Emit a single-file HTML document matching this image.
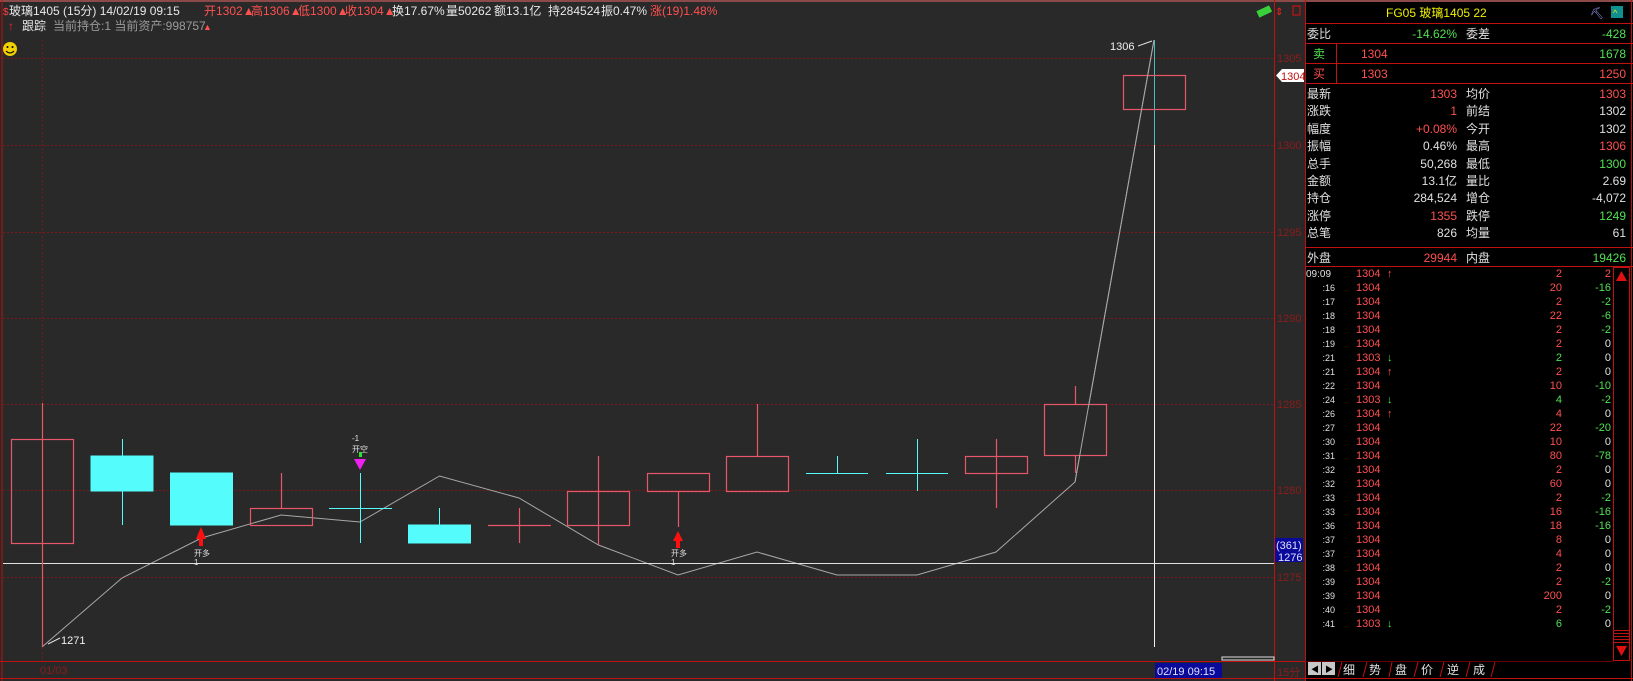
<!DOCTYPE html>
<html><head><meta charset="utf-8"><style>
html,body{margin:0;padding:0;background:#000;width:1633px;height:681px;overflow:hidden}
svg{display:block}
text{font-family:"Liberation Sans","Noto Sans CJK SC",sans-serif;font-size:12px}
</style></head><body>
<svg width="1633" height="681" viewBox="0 0 1633 681" xmlns="http://www.w3.org/2000/svg">
<rect x="0" y="0" width="1305" height="681" fill="#292929"/>
<rect x="1305" y="0" width="328" height="681" fill="#000"/>
<line x1="0" y1="1" x2="1633" y2="1" fill="none" stroke="#8a4a4a" stroke-width="2"/>
<line x1="2" y1="0" x2="2" y2="681" stroke="#c01010" stroke-width="1"/>
<line x1="1274.5" y1="0" x2="1274.5" y2="681" stroke="#c01010"/>
<line x1="1305.5" y1="0" x2="1305.5" y2="681" stroke="#c01010"/>
<line x1="0" y1="661.5" x2="1305" y2="661.5" stroke="#c01010"/>
<line x1="0" y1="678.5" x2="1305" y2="678.5" stroke="#c01010"/>
<g stroke="#7a1818" stroke-dasharray="2,2">
<line x1="3" y1="58.5" x2="1274" y2="58.5"/><line x1="3" y1="145.5" x2="1274" y2="145.5"/>
<line x1="3" y1="232.5" x2="1274" y2="232.5"/><line x1="3" y1="318.5" x2="1274" y2="318.5"/>
<line x1="3" y1="404.5" x2="1274" y2="404.5"/><line x1="3" y1="490.5" x2="1274" y2="490.5"/>
<line x1="3" y1="577.5" x2="1274" y2="577.5"/>
<line x1="42.5" y1="40" x2="42.5" y2="661"/>
</g>
<g fill="#8a1c1c">
<text x="1277" y="62" style="font-size:11px">1305</text><text x="1277" y="149" style="font-size:11px">1300</text>
<text x="1277" y="236" style="font-size:11px">1295</text><text x="1277" y="322" style="font-size:11px">1290</text>
<text x="1277" y="408" style="font-size:11px">1285</text><text x="1277" y="494" style="font-size:11px">1280</text>
<text x="1277" y="581" style="font-size:11px">1275</text><text x="1277" y="676" style="font-size:11px">15分</text>
</g>
<text x="3" y="15" fill="#ff4040" style="font-size:10px">$</text>
<text x="9" y="15" fill="#e8e8e8">玻璃1405 (15分) 14/02/19 09:15</text>
<text x="204" y="15" fill="#ff5050">开1302▲</text>
<text x="251" y="15" fill="#ff5050">高1306▲</text>
<text x="298" y="15" fill="#ff5050">低1300▲</text>
<text x="345" y="15" fill="#ff5050">收1304▲</text>
<text x="392" y="15" fill="#e8e8e8">换17.67%</text>
<text x="446" y="15" fill="#e8e8e8">量50262</text>
<text x="494" y="15" fill="#e8e8e8">额13.1亿</text>
<text x="548" y="15" fill="#e8e8e8">持284524</text>
<text x="601" y="15" fill="#e8e8e8">振0.47%</text>
<text x="650" y="15" fill="#ff5050">涨(19)1.48%</text>
<text x="8" y="30" fill="#ff2020">↑</text>
<text x="22" y="30" fill="#e8e8e8">跟踪</text>
<text x="53" y="30" fill="#9a9a9a">当前持仓:1 当前资产:998757</text>
<text x="203" y="30" fill="#ff5050" style="font-size:9px">▲</text>
<circle cx="10" cy="49" r="7" fill="#f0d000"/>
<circle cx="7.5" cy="47" r="1" fill="#000"/><circle cx="12.5" cy="47" r="1" fill="#000"/>
<path d="M6 51 Q10 55 14 51" stroke="#000" fill="none"/>
<rect x="1257" y="8" width="14" height="7" fill="#3ad03a" transform="rotate(-25 1264 11)"/>
<text x="1275" y="15" fill="#ff2020" style="font-size:10px">⇕</text>
<rect x="1293" y="6" width="7" height="9" fill="none" stroke="#e01010"/>
<polyline fill="none" stroke="#a8a8a8" stroke-width="1" points="42,647 122,578 201.5,538 281,515 360,522 439.5,476 519,498 598.5,545 678,575 757,552 837,575 917,575 996,552 1075,482 1154,40"/>
<line x1="3" y1="563.5" x2="1274" y2="563.5" stroke="#e0e0e0"/>
<line x1="1154.5" y1="40" x2="1154.5" y2="647" stroke="#e8f0f0"/>
<line x1="1154.5" y1="40" x2="1154.5" y2="145" stroke="#40c0c0"/>
<g stroke="#e8566a" fill="none" stroke-width="1.2">
<line x1="42.5" y1="403" x2="42.5" y2="647"/><rect x="11.5" y="439.5" width="62" height="104"/>
<line x1="281.5" y1="473" x2="281.5" y2="508"/><rect x="250.5" y="508.5" width="62" height="17"/>
<line x1="519.5" y1="508" x2="519.5" y2="543"/><line x1="488" y1="525.5" x2="551" y2="525.5"/>
<line x1="598.5" y1="456" x2="598.5" y2="545"/><rect x="567.5" y="491.5" width="62" height="34"/>
<line x1="678.5" y1="491" x2="678.5" y2="527"/><rect x="647.5" y="473.5" width="62" height="18"/>
<line x1="757.5" y1="404" x2="757.5" y2="456"/><rect x="726.5" y="456.5" width="62" height="35"/>
<line x1="996.5" y1="439" x2="996.5" y2="508"/><rect x="965.5" y="456.5" width="62" height="17"/>
<line x1="1075.5" y1="386" x2="1075.5" y2="473"/><rect x="1044.5" y="404.5" width="62" height="51" fill="#292929"/>
<rect x="1123.5" y="75.5" width="62" height="34"/>
</g>
<polyline fill="none" stroke="#a8a8a8" points="1075,482 1154,40"/>
<g stroke="#54fcfc" fill="#54fcfc">
<line x1="122.5" y1="439" x2="122.5" y2="525"/><rect x="91" y="456" width="62" height="35"/>
<rect x="170.5" y="473" width="62" height="52"/>
<line x1="360.5" y1="473" x2="360.5" y2="543"/><line x1="329" y1="508.5" x2="392" y2="508.5"/>
<line x1="439.5" y1="508" x2="439.5" y2="525"/><rect x="408.5" y="525" width="62" height="18"/>
<line x1="837.5" y1="456" x2="837.5" y2="473"/><line x1="806" y1="473.5" x2="868" y2="473.5"/>
<line x1="917.5" y1="439" x2="917.5" y2="491"/><line x1="886" y1="473.5" x2="948" y2="473.5"/>
</g>
<path d="M201 527 L196 539 L199 539 L199 546 L203 546 L203 539 L206 539 Z" fill="#ff1010"/>
<text x="194" y="556" fill="#e0e0e0" style="font-size:8px">开多</text>
<text x="194" y="565" fill="#e0e0e0" style="font-size:8px">1</text>
<path d="M678 531 L673 541 L676 541 L676 548 L680 548 L680 541 L683 541 Z" fill="#ff1010"/>
<text x="671" y="556" fill="#e0e0e0" style="font-size:8px">开多</text>
<text x="671" y="565" fill="#e0e0e0" style="font-size:8px">1</text>
<text x="352" y="441" fill="#e0e0e0" style="font-size:8px">-1</text>
<text x="352" y="452" fill="#e0e0e0" style="font-size:8px">开空</text>
<rect x="359" y="452" width="3" height="5" fill="#30e030"/>
<path d="M354 459 L366 459 L360 470 Z" fill="#f020f0"/>
<path d="M48 644 L60 638" stroke="#e0e0e0"/>
<text x="61" y="644" fill="#f0f0f0" style="font-size:11px">1271</text>
<path d="M1138 46 L1152 41" stroke="#e0e0e0"/>
<text x="1110" y="50" fill="#f0f0f0" style="font-size:11px">1306</text>
<path d="M1282 69 L1304 69 L1304 82 L1282 82 L1276 75.5 Z" fill="#fff"/>
<text x="1281" y="80" fill="#c01010" style="font-size:11px">1304</text>
<rect x="1275" y="538" width="28" height="24" fill="#0a0a9a"/>
<text x="1276" y="549" fill="#e0e0ff" style="font-size:11px">(361)</text>
<text x="1278" y="561" fill="#e0e0ff" style="font-size:11px">1276</text>
<text x="40" y="674" fill="#8a1c1c" style="font-size:11px">01/03</text>
<rect x="1155" y="663" width="67" height="15" fill="#0a0a9a"/>
<text x="1157" y="675" fill="#e0e0ff" style="font-size:11px">02/19 09:15</text>
<rect x="1222" y="657" width="52" height="3" fill="none" stroke="#e0e0e0"/>
<g stroke="#c01010">
<line x1="1305" y1="23.5" x2="1633" y2="23.5"/><line x1="1305" y1="43.5" x2="1633" y2="43.5"/>
<line x1="1305" y1="63.5" x2="1633" y2="63.5"/><line x1="1305" y1="83.5" x2="1633" y2="83.5"/>
<line x1="1305" y1="247.5" x2="1633" y2="247.5"/><line x1="1305" y1="266.5" x2="1633" y2="266.5"/>
<line x1="1336.5" y1="44" x2="1336.5" y2="83"/>
<line x1="1631.5" y1="0" x2="1631.5" y2="681"/>
</g>
<text x="1386" y="17" fill="#f0f000">FG05  玻璃1405  22</text>
<text x="1590" y="17" fill="#a0a0ff" style="font-size:11px">⛏</text>
<rect x="1611" y="6" width="12" height="12" fill="#109090"/>
<text x="1613" y="16" fill="#f0f000" style="font-size:9px">^</text>
<g>
<text x="1307" y="38" fill="#e0e0e0">委比</text><text x="1457" y="38" fill="#52e052" text-anchor="end">-14.62%</text>
<text x="1466" y="38" fill="#e0e0e0">委差</text><text x="1626" y="38" fill="#52e052" text-anchor="end">-428</text>
<text x="1313" y="58" fill="#52e052">卖</text><text x="1361" y="58" fill="#ff5050">1304</text><text x="1626" y="58" fill="#52e052" text-anchor="end">1678</text>
<text x="1313" y="78" fill="#ff5050">买</text><text x="1361" y="78" fill="#ff5050">1303</text><text x="1626" y="78" fill="#ff5050" text-anchor="end">1250</text>
</g>
<g>
<text x="1307" y="98" fill="#e0e0e0">最新</text><text x="1457" y="98" fill="#ff5050" text-anchor="end">1303</text><text x="1466" y="98" fill="#e0e0e0">均价</text><text x="1626" y="98" fill="#ff5050" text-anchor="end">1303</text>
<text x="1307" y="115" fill="#e0e0e0">涨跌</text><text x="1457" y="115" fill="#ff5050" text-anchor="end">1</text><text x="1466" y="115" fill="#e0e0e0">前结</text><text x="1626" y="115" fill="#e0e0e0" text-anchor="end">1302</text>
<text x="1307" y="133" fill="#e0e0e0">幅度</text><text x="1457" y="133" fill="#ff5050" text-anchor="end">+0.08%</text><text x="1466" y="133" fill="#e0e0e0">今开</text><text x="1626" y="133" fill="#e0e0e0" text-anchor="end">1302</text>
<text x="1307" y="150" fill="#e0e0e0">振幅</text><text x="1457" y="150" fill="#e0e0e0" text-anchor="end">0.46%</text><text x="1466" y="150" fill="#e0e0e0">最高</text><text x="1626" y="150" fill="#ff5050" text-anchor="end">1306</text>
<text x="1307" y="168" fill="#e0e0e0">总手</text><text x="1457" y="168" fill="#e0e0e0" text-anchor="end">50,268</text><text x="1466" y="168" fill="#e0e0e0">最低</text><text x="1626" y="168" fill="#52e052" text-anchor="end">1300</text>
<text x="1307" y="185" fill="#e0e0e0">金额</text><text x="1457" y="185" fill="#e0e0e0" text-anchor="end">13.1亿</text><text x="1466" y="185" fill="#e0e0e0">量比</text><text x="1626" y="185" fill="#e0e0e0" text-anchor="end">2.69</text>
<text x="1307" y="202" fill="#e0e0e0">持仓</text><text x="1457" y="202" fill="#e0e0e0" text-anchor="end">284,524</text><text x="1466" y="202" fill="#e0e0e0">增仓</text><text x="1626" y="202" fill="#e0e0e0" text-anchor="end">-4,072</text>
<text x="1307" y="220" fill="#e0e0e0">涨停</text><text x="1457" y="220" fill="#ff5050" text-anchor="end">1355</text><text x="1466" y="220" fill="#e0e0e0">跌停</text><text x="1626" y="220" fill="#52e052" text-anchor="end">1249</text>
<text x="1307" y="237" fill="#e0e0e0">总笔</text><text x="1457" y="237" fill="#e0e0e0" text-anchor="end">826</text><text x="1466" y="237" fill="#e0e0e0">均量</text><text x="1626" y="237" fill="#e0e0e0" text-anchor="end">61</text>
<text x="1307" y="262" fill="#e0e0e0">外盘</text><text x="1457" y="262" fill="#ff5050" text-anchor="end">29944</text><text x="1466" y="262" fill="#e0e0e0">内盘</text><text x="1626" y="262" fill="#52e052" text-anchor="end">19426</text>
</g>
<text x="1306" y="277" fill="#e0e0e0" style="font-size:10px">09:09</text>
<rect x="1613.5" y="267.5" width="16" height="393" fill="#000" stroke="#c01010"/>
<path d="M1616 281 L1621.5 271 L1627 281 Z" fill="#e01010"/>
<path d="M1616 646 L1621.5 656 L1627 646 Z" fill="#e01010"/>
<g stroke="#c01010"><line x1="1614" y1="630.5" x2="1629" y2="630.5"/><line x1="1614" y1="633.5" x2="1629" y2="633.5"/><line x1="1614" y1="636.5" x2="1629" y2="636.5"/><line x1="1614" y1="639.5" x2="1629" y2="639.5"/><line x1="1614" y1="642.5" x2="1629" y2="642.5"/></g>
<rect x="1308" y="661" width="13" height="14" fill="#c8c8c8"/><rect x="1322" y="661" width="13" height="14" fill="#c8c8c8"/>
<text x="1311" y="672" fill="#000" style="font-size:8px">◀</text><text x="1325" y="672" fill="#000" style="font-size:8px">▶</text>
<path d="M1338 677 L1342 662 M1367 662 L1363 677 M1392 662 L1389 677 M1418 662 L1414 677 M1444 662 L1440 677 M1470 662 L1466 677 M1495 662 L1491 677" stroke="#c01010" fill="none"/>
<line x1="1305" y1="661.5" x2="1613" y2="661.5" stroke="#600"/>
<text x="1343" y="674" fill="#e0e0e0">细</text><text x="1369" y="674" fill="#e0e0e0">势</text><text x="1395" y="674" fill="#e0e0e0">盘</text>
<text x="1421" y="674" fill="#e0e0e0">价</text><text x="1447" y="674" fill="#e0e0e0">逆</text><text x="1473" y="674" fill="#e0e0e0">成</text>
<line x1="1305" y1="678.5" x2="1633" y2="678.5" stroke="#c01010"/>
<g fill="#e0e0e0" text-anchor="end" style="font-size:9px">
<text x="1335" y="291" style="font-size:9px">:16</text><text x="1335" y="305" style="font-size:9px">:17</text>
<text x="1335" y="319" style="font-size:9px">:18</text><text x="1335" y="333" style="font-size:9px">:18</text>
<text x="1335" y="347" style="font-size:9px">:19</text><text x="1335" y="361" style="font-size:9px">:21</text>
<text x="1335" y="375" style="font-size:9px">:21</text><text x="1335" y="389" style="font-size:9px">:22</text>
<text x="1335" y="403" style="font-size:9px">:24</text><text x="1335" y="417" style="font-size:9px">:26</text>
<text x="1335" y="431" style="font-size:9px">:27</text><text x="1335" y="445" style="font-size:9px">:30</text>
<text x="1335" y="459" style="font-size:9px">:31</text><text x="1335" y="473" style="font-size:9px">:32</text>
<text x="1335" y="487" style="font-size:9px">:32</text><text x="1335" y="501" style="font-size:9px">:33</text>
<text x="1335" y="515" style="font-size:9px">:33</text><text x="1335" y="529" style="font-size:9px">:36</text>
<text x="1335" y="543" style="font-size:9px">:37</text><text x="1335" y="557" style="font-size:9px">:37</text>
<text x="1335" y="571" style="font-size:9px">:38</text><text x="1335" y="585" style="font-size:9px">:39</text>
<text x="1335" y="599" style="font-size:9px">:39</text><text x="1335" y="613" style="font-size:9px">:40</text>
<text x="1335" y="627" style="font-size:9px">:41</text>
</g>
<g fill="#ff5050">
<text x="1356" y="277" style="font-size:11px">1304</text><text x="1356" y="291" style="font-size:11px">1304</text><text x="1356" y="305" style="font-size:11px">1304</text><text x="1356" y="319" style="font-size:11px">1304</text>
<text x="1356" y="333" style="font-size:11px">1304</text><text x="1356" y="347" style="font-size:11px">1304</text><text x="1356" y="361" style="font-size:11px">1303</text><text x="1356" y="375" style="font-size:11px">1304</text>
<text x="1356" y="389" style="font-size:11px">1304</text><text x="1356" y="403" style="font-size:11px">1303</text><text x="1356" y="417" style="font-size:11px">1304</text><text x="1356" y="431" style="font-size:11px">1304</text>
<text x="1356" y="445" style="font-size:11px">1304</text><text x="1356" y="459" style="font-size:11px">1304</text><text x="1356" y="473" style="font-size:11px">1304</text><text x="1356" y="487" style="font-size:11px">1304</text>
<text x="1356" y="501" style="font-size:11px">1304</text><text x="1356" y="515" style="font-size:11px">1304</text><text x="1356" y="529" style="font-size:11px">1304</text><text x="1356" y="543" style="font-size:11px">1304</text>
<text x="1356" y="557" style="font-size:11px">1304</text><text x="1356" y="571" style="font-size:11px">1304</text><text x="1356" y="585" style="font-size:11px">1304</text><text x="1356" y="599" style="font-size:11px">1304</text>
<text x="1356" y="613" style="font-size:11px">1304</text><text x="1356" y="627" style="font-size:11px">1303</text>
</g>
<g>
<text x="1387" y="277" fill="#ff5050" style="font-size:11px">↑</text><text x="1387" y="361" fill="#52e052" style="font-size:11px">↓</text><text x="1387" y="375" fill="#ff5050" style="font-size:11px">↑</text>
<text x="1387" y="403" fill="#52e052" style="font-size:11px">↓</text><text x="1387" y="417" fill="#ff5050" style="font-size:11px">↑</text><text x="1387" y="627" fill="#52e052" style="font-size:11px">↓</text>
</g>
<g text-anchor="end">
<text x="1562" y="277" fill="#ff5050" style="font-size:11px">2</text><text x="1611" y="277" fill="#ff5050" style="font-size:11px">2</text>
<text x="1562" y="291" fill="#ff5050" style="font-size:11px">20</text><text x="1611" y="291" fill="#52e052" style="font-size:11px">-16</text>
<text x="1562" y="305" fill="#ff5050" style="font-size:11px">2</text><text x="1611" y="305" fill="#52e052" style="font-size:11px">-2</text>
<text x="1562" y="319" fill="#ff5050" style="font-size:11px">22</text><text x="1611" y="319" fill="#52e052" style="font-size:11px">-6</text>
<text x="1562" y="333" fill="#ff5050" style="font-size:11px">2</text><text x="1611" y="333" fill="#52e052" style="font-size:11px">-2</text>
<text x="1562" y="347" fill="#ff5050" style="font-size:11px">2</text><text x="1611" y="347" fill="#e0e0e0" style="font-size:11px">0</text>
<text x="1562" y="361" fill="#52e052" style="font-size:11px">2</text><text x="1611" y="361" fill="#e0e0e0" style="font-size:11px">0</text>
<text x="1562" y="375" fill="#ff5050" style="font-size:11px">2</text><text x="1611" y="375" fill="#e0e0e0" style="font-size:11px">0</text>
<text x="1562" y="389" fill="#ff5050" style="font-size:11px">10</text><text x="1611" y="389" fill="#52e052" style="font-size:11px">-10</text>
<text x="1562" y="403" fill="#52e052" style="font-size:11px">4</text><text x="1611" y="403" fill="#52e052" style="font-size:11px">-2</text>
<text x="1562" y="417" fill="#ff5050" style="font-size:11px">4</text><text x="1611" y="417" fill="#e0e0e0" style="font-size:11px">0</text>
<text x="1562" y="431" fill="#ff5050" style="font-size:11px">22</text><text x="1611" y="431" fill="#52e052" style="font-size:11px">-20</text>
<text x="1562" y="445" fill="#ff5050" style="font-size:11px">10</text><text x="1611" y="445" fill="#e0e0e0" style="font-size:11px">0</text>
<text x="1562" y="459" fill="#ff5050" style="font-size:11px">80</text><text x="1611" y="459" fill="#52e052" style="font-size:11px">-78</text>
<text x="1562" y="473" fill="#ff5050" style="font-size:11px">2</text><text x="1611" y="473" fill="#e0e0e0" style="font-size:11px">0</text>
<text x="1562" y="487" fill="#ff5050" style="font-size:11px">60</text><text x="1611" y="487" fill="#e0e0e0" style="font-size:11px">0</text>
<text x="1562" y="501" fill="#ff5050" style="font-size:11px">2</text><text x="1611" y="501" fill="#52e052" style="font-size:11px">-2</text>
<text x="1562" y="515" fill="#ff5050" style="font-size:11px">16</text><text x="1611" y="515" fill="#52e052" style="font-size:11px">-16</text>
<text x="1562" y="529" fill="#ff5050" style="font-size:11px">18</text><text x="1611" y="529" fill="#52e052" style="font-size:11px">-16</text>
<text x="1562" y="543" fill="#ff5050" style="font-size:11px">8</text><text x="1611" y="543" fill="#e0e0e0" style="font-size:11px">0</text>
<text x="1562" y="557" fill="#ff5050" style="font-size:11px">4</text><text x="1611" y="557" fill="#e0e0e0" style="font-size:11px">0</text>
<text x="1562" y="571" fill="#ff5050" style="font-size:11px">2</text><text x="1611" y="571" fill="#e0e0e0" style="font-size:11px">0</text>
<text x="1562" y="585" fill="#ff5050" style="font-size:11px">2</text><text x="1611" y="585" fill="#52e052" style="font-size:11px">-2</text>
<text x="1562" y="599" fill="#ff5050" style="font-size:11px">200</text><text x="1611" y="599" fill="#e0e0e0" style="font-size:11px">0</text>
<text x="1562" y="613" fill="#ff5050" style="font-size:11px">2</text><text x="1611" y="613" fill="#52e052" style="font-size:11px">-2</text>
<text x="1562" y="627" fill="#52e052" style="font-size:11px">6</text><text x="1611" y="627" fill="#e0e0e0" style="font-size:11px">0</text>
</g>
</svg>
</body></html>
